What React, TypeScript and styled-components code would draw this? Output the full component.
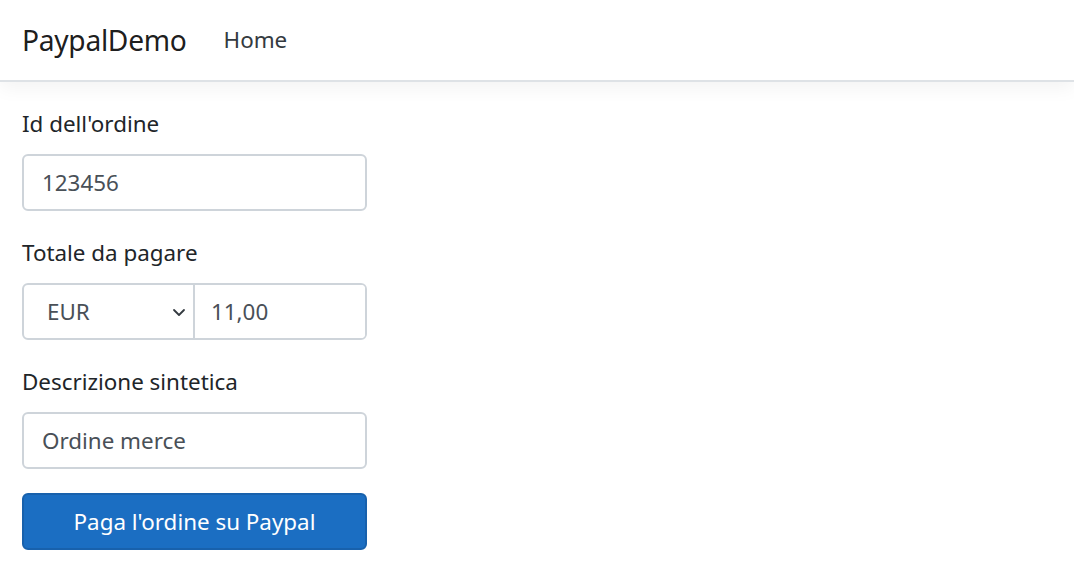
import React from "react";
import styled, { createGlobalStyle } from "styled-components";

const Global = createGlobalStyle`
  html, body { margin: 0; padding: 0; background: #fff; }
  body {
    font-family: "Noto Sans", "Open Sans", sans-serif;
    font-size: 22.4px;
    line-height: 1.5;
    color: #212529;
  }
  * { box-sizing: border-box; }
`;

const Header = styled.header`
  height: 82px;
  border-bottom: 2px solid #dee2e6;
  box-shadow: 0 6px 18px rgba(0, 0, 0, 0.05);
  background: #fff;
  display: flex;
  align-items: center;
  padding: 0 22px;
`;

const Brand = styled.a`
  font-size: 28.2px;
  color: rgba(0, 0, 0, 0.9);
  text-decoration: none;
  margin-right: 25px;
  letter-spacing: -0.3px;
`;

const NavLink = styled.a`
  font-size: 22.4px;
  color: #343a40;
  text-decoration: none;
  padding: 0 12px;
`;

const Main = styled.main`
  padding: 24px 22px 0;
`;

const Form = styled.form`
  width: 345px;
  display: flex;
  flex-direction: column;
`;

const Group = styled.div`
  display: flex;
  flex-direction: column;
  margin-bottom: 24px;
`;

const Label = styled.label`
  font-size: 22.4px;
  line-height: 36px;
  margin-bottom: 12px;
`;

const Field = styled.input`
  height: 57px;
  width: 100%;
  border: 2px solid #ced4da;
  border-radius: 6px;
  padding: 0 18px;
  font: inherit;
  font-size: 22.4px;
  color: #495057;
  background: #fff;
  outline: none;
`;

const InputGroup = styled.div`
  display: flex;
  height: 57px;
  border: 2px solid #ced4da;
  border-radius: 6px;
  overflow: hidden;
`;

const SelectBox = styled.div`
  width: 171px;
  display: flex;
  align-items: center;
  justify-content: space-between;
  padding: 0 6px 0 23px;
  border-right: 2px solid #ced4da;
  font-size: 22.4px;
  color: #495057;
`;

const GroupInput = styled.input`
  flex: 1;
  min-width: 0;
  border: none;
  padding: 0 16px;
  font: inherit;
  font-size: 22.4px;
  color: #495057;
  outline: none;
  background: #fff;
`;

const Button = styled.button`
  height: 57px;
  width: 100%;
  border: 2px solid #1861ac;
  border-radius: 6px;
  background: #1b6ec2;
  color: #fff;
  font: inherit;
  font-size: 22.4px;
  cursor: pointer;
`;

export default function App() {
  return (
    <>
      <Global />
      <Header>
        <Brand href="#">PaypalDemo</Brand>
        <NavLink href="#">Home</NavLink>
      </Header>
      <Main>
        <Form onSubmit={(e) => e.preventDefault()}>
          <Group>
            <Label>Id dell'ordine</Label>
            <Field defaultValue="123456" />
          </Group>
          <Group>
            <Label>Totale da pagare</Label>
            <InputGroup>
              <SelectBox>
                <span>EUR</span>
                <svg width="16" height="16" viewBox="0 0 16 16" fill="none">
                  <path d="M3 6l5 5 5-5" stroke="#343a40" strokeWidth="1.8" strokeLinecap="round" strokeLinejoin="round" />
                </svg>
              </SelectBox>
              <GroupInput defaultValue="11,00" />
            </InputGroup>
          </Group>
          <Group>
            <Label>Descrizione sintetica</Label>
            <Field defaultValue="Ordine merce" />
          </Group>
          <Button type="submit">Paga l'ordine su Paypal</Button>
        </Form>
      </Main>
    </>
  );
}
